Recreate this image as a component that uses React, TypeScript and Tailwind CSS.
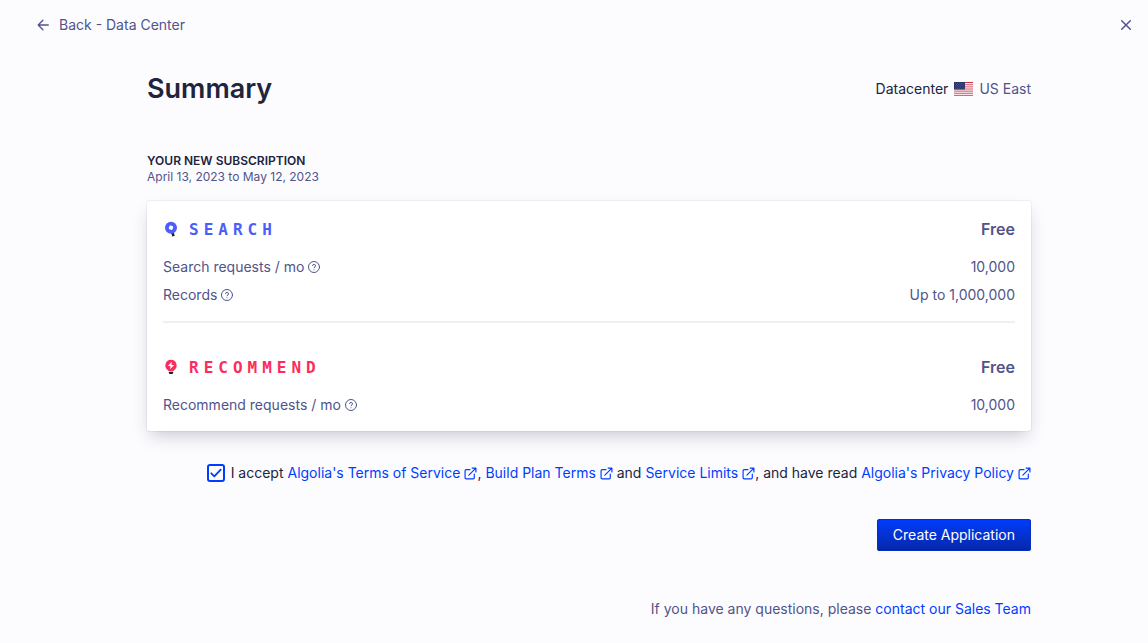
import type { ReactNode } from 'react';

function HelpIcon() {
  return (
    <svg viewBox="0 0 24 24" className="size-3 shrink-0" fill="none" stroke="currentColor" strokeWidth="2" strokeLinecap="round" strokeLinejoin="round" aria-hidden="true">
      <circle cx="12" cy="12" r="11" />
      <path d="M9 9a3 3 0 0 1 5.9 1c0 2-2.9 2.7-2.9 3.6M12 17.5h.01" />
    </svg>
  );
}

function ExternalIcon() {
  return (
    <svg viewBox="0 0 24 24" className="ml-1 inline size-[13px] align-[-2px]" fill="none" stroke="currentColor" strokeWidth="2.200" strokeLinecap="round" strokeLinejoin="round" aria-hidden="true">
      <path d="M19 13v7a2 2 0 0 1-2 2H4a2 2 0 0 1-2-2V7a2 2 0 0 1 2-2h7M15 2h7v7M9 15 22 2" />
    </svg>
  );
}

function FlagUS() {
  return (
    <svg viewBox="0 0 19 14" className="h-3.5 w-[19px]" aria-hidden="true">
      <path fill="#fbe9ec" d="M0 0h19v14H0z" />
      <path stroke="#c5363f" d="M0 .5h19" />
      <path stroke="#cf5560" strokeWidth=".9" d="M0 2.690h19M0 4.850h19M0 7h19M0 9.150h19M0 11.300h19M0 13.460h19" />
      <path fill="#26336b" d="M0 0h11v7.500H0z" />
      <path stroke="#7780ab" strokeWidth=".7" strokeDasharray=".7 1.500" d="M1 1.200h9.500M2 2.500h8M1 3.800h9.500M2 5.100h8M1 6.400h9.500" />
    </svg>
  );
}

function SearchLogo() {
  return (
    <svg viewBox="0 0 16 16" className="size-4" aria-hidden="true">
      <path fill="#1e1f33" d="M8.300 12.300 10.600 11.300 11.800 14.800 9.200 15.400z" />
      <circle cx="8" cy="6.700" r="6" fill="#4c5efa" />
      <rect x="6" y="4.700" width="4" height="4" rx="1.300" fill="#fff" transform="rotate(20 8 6.700)" />
    </svg>
  );
}

function RecommendLogo() {
  return (
    <svg viewBox="0 0 16 16" className="size-4" aria-hidden="true">
      <path fill="#fa2d5c" d="M8 .7a5.800 5.800 0 0 1 3.200 10.500L10.300 12H5.700l-.9-.8A5.800 5.800 0 0 1 8 .7z" />
      <path fill="#fff" d="M8.800 2.800 4.800 7h2.700l-.4 3.200L11.200 6H8.500z" />
      <path fill="#1e1f33" d="M5.800 12.700h4.400v1.200L9.300 15H6.700l-.9-1.100z" />
    </svg>
  );
}

function ProductHead({ logo, name, tone }: { logo: ReactNode; name: string; tone: string }) {
  return (
    <div className="flex h-6 items-center justify-between text-base">
      <h3 className={`flex items-center gap-2.5 font-['DejaVu_Sans_Mono',monospace] font-bold tracking-[5px] ${tone}`}>
        {logo}
        <span className="pt-0.5">{name}</span>
      </h3>
      <span className="font-semibold">Free</span>
    </div>
  );
}

function UsageRow({ label, value }: { label: string; value: string }) {
  return (
    <div className="flex h-5 items-center justify-between">
      <dt className="flex items-center gap-1">
        {label}
        <button type="button" aria-label={`About ${label}`}>
          <HelpIcon />
        </button>
      </dt>
      <dd>{value}</dd>
    </div>
  );
}

function DocLink({ children }: { children: ReactNode }) {
  return (
    <a href="#" className="text-[#003dff]">
      {children}
      <ExternalIcon />
    </a>
  );
}

export default function App() {
  return (
    <div className="min-h-screen bg-[#fcfcff] pb-6 font-['Inter',sans-serif] text-sm text-[#50548b]">
      <header className="flex h-[50px] items-center justify-between pr-4 pl-[37px]">
        <a href="#" className="flex items-center gap-2.5">
          <svg viewBox="0 0 12 12" className="size-3" fill="none" stroke="currentColor" strokeWidth="1.300" strokeLinecap="round" strokeLinejoin="round" aria-hidden="true">
            <path d="M11.300 6H1.200M5.900 1.200 1.200 6l4.700 4.800" />
          </svg>
          Back - Data Center
        </a>
        <button type="button" aria-label="Close">
          <svg viewBox="0 0 12 12" className="size-3" fill="none" stroke="currentColor" strokeWidth="1.500" strokeLinecap="round" aria-hidden="true">
            <path d="m1.700 1.700 8.600 8.600M10.300 1.700l-8.600 8.600" />
          </svg>
        </button>
      </header>

      <main className="pt-[19px] pr-[117px] pl-[147px]">
        <div className="flex items-center justify-between">
          <h1 className="text-[27px] leading-10 font-semibold text-[#21243d]">Summary</h1>
          <p className="flex items-center gap-1.5">
            <span className="text-[#21243d]">Datacenter</span>
            <FlagUS />
            US East
          </p>
        </div>

        <div className="mt-11 text-xs leading-4">
          <h2 className="font-semibold text-[#21243d] uppercase">Your new subscription</h2>
          <p>April 13, 2023 to May 12, 2023</p>
        </div>

        <section className="mt-4 rounded-[3px] bg-white p-4 shadow-[0_0_0_1px_rgba(35,38,59,0.05),0_8px_16px_-4px_rgba(35,38,59,0.25)]">
          <ProductHead logo={<SearchLogo />} name="SEARCH" tone="text-[#4c5efa]" />
          <dl className="mt-4 flex flex-col gap-2">
            <UsageRow label="Search requests / mo" value="10,000" />
            <UsageRow label="Records" value="Up to 1,000,000" />
          </dl>
          <hr className="mt-4 mb-8 border-t-2 border-[#efeff5]" />
          <ProductHead logo={<RecommendLogo />} name="RECOMMEND" tone="text-[#fa2d5c]" />
          <dl className="mt-4">
            <UsageRow label="Recommend requests / mo" value="10,000" />
          </dl>
        </section>

        <form className="flex flex-col items-end">
          <div className="mt-8 flex items-center gap-1.5 leading-5 text-[#21243d]">
            <span className="grid shrink-0">
              <input id="accept" type="checkbox" defaultChecked className="peer col-start-1 row-start-1 size-[18px] appearance-none rounded-[3px] border-2 border-[#003dff] bg-white" />
              <svg viewBox="0 0 18 18" className="pointer-events-none col-start-1 row-start-1 hidden size-[18px] peer-checked:block" fill="none" stroke="#003dff" strokeWidth="1.800" strokeLinecap="round" strokeLinejoin="round" aria-hidden="true">
                <path d="m4.300 9.300 3 3 6.400-6.700" />
              </svg>
            </span>
            <label htmlFor="accept">
              I accept <DocLink>Algolia's Terms of Service</DocLink>, <DocLink>Build Plan Terms</DocLink> and{' '}
              <DocLink>Service Limits</DocLink>, and have read <DocLink>Algolia's Privacy Policy</DocLink>
            </label>
          </div>
          <button type="button" className="mt-9 h-8 rounded-[3px] bg-linear-to-b from-[#003dff] to-[#0528a8] px-4 text-white shadow-[inset_0_0_0_1px_#0a2fc0,inset_0_-2px_1px_rgba(0,20,120,0.4)]">
            Create Application
          </button>
          <p className="mt-12 leading-5">
            If you have any questions, please{' '}
            <a href="#" className="text-[#003dff]">
              contact our Sales Team
            </a>
          </p>
        </form>
      </main>
    </div>
  );
}
